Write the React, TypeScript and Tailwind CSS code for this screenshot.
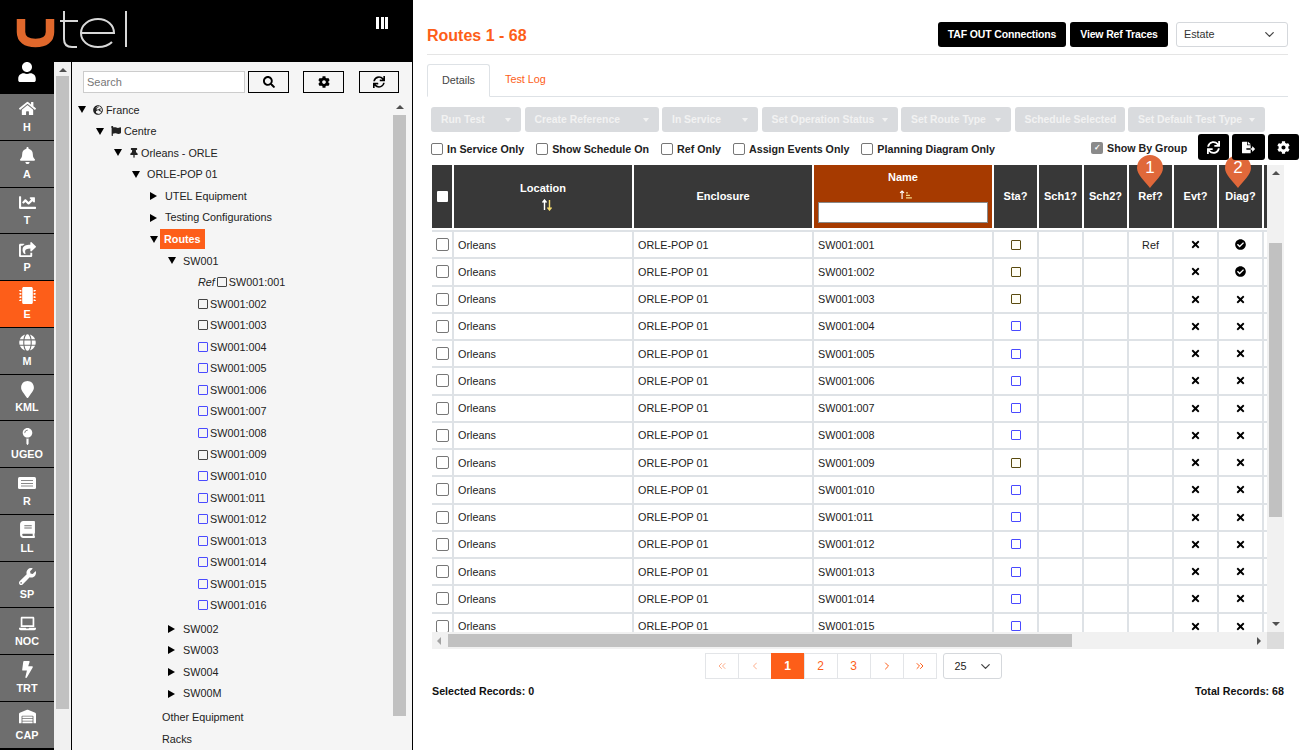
import {
  FaBell,
  FaBolt,
  FaBook,
  FaCheckCircle,
  FaCog,
  FaFileExport,
  FaFlag,
  FaGlobe,
  FaGlobeEurope,
  FaHome,
  FaLaptop,
  FaMapMarker,
  FaMapPin,
  FaMicrochip,
  FaSearch,
  FaShareSquare,
  FaSync,
  FaThumbtack,
  FaTimes,
  FaUser,
  FaWarehouse,
  FaWrench,
  FaChartLine,
} from "react-icons/fa";
import { FiChevronDown, FiChevronLeft, FiChevronRight, FiChevronsLeft, FiChevronsRight } from "react-icons/fi";
import type { ReactNode } from "react";

function CardIcon() {
  return (
    <svg viewBox="0 0 18 12" className="h-[12px] w-[18px]">
      <rect width="18" height="12" rx="1.5" fill="white" />
      <path d="M3 3.5h12M3 6.5h12M3 9h12" stroke="#8a8a8a" strokeWidth="1" />
    </svg>
  );
}

const navItems = [
  { label: "H", icon: <FaHome /> },
  { label: "A", icon: <FaBell /> },
  { label: "T", icon: <FaChartLine /> },
  { label: "P", icon: <FaShareSquare /> },
  { label: "E", icon: <FaMicrochip />, active: true },
  { label: "M", icon: <FaGlobe /> },
  { label: "KML", icon: <FaMapMarker /> },
  { label: "UGEO", icon: <FaMapPin /> },
  { label: "R", icon: <CardIcon /> },
  { label: "LL", icon: <FaBook /> },
  { label: "SP", icon: <FaWrench /> },
  { label: "NOC", icon: <FaLaptop /> },
  { label: "TRT", icon: <FaBolt /> },
  { label: "CAP", icon: <FaWarehouse /> },
];

const actions = [
  { label: "Run Test", width: "w-[90px]", caret: true },
  { label: "Create Reference", width: "w-[134px]", caret: true },
  { label: "In Service", width: "w-[96px]", caret: true },
  { label: "Set Operation Status", width: "w-[136px]", caret: true },
  { label: "Set Route Type", width: "w-[110px]", caret: true },
  { label: "Schedule Selected", width: "w-[110px]", caret: false },
  { label: "Set Default Test Type", width: "w-[137px]", caret: true },
];

const filters = [
  "In Service Only",
  "Show Schedule On",
  "Ref Only",
  "Assign Events Only",
  "Planning Diagram Only",
];

const blueRoutes = [4, 5, 6, 7, 8, 10, 11, 12, 13, 14, 15, 16];
const routeName = (n: number) => `SW001:${String(n).padStart(3, "0")}`;

function Caret({ down }: { down?: boolean }) {
  return down ? (
    <span className="inline-block h-0 w-0 border-x-[4px] border-t-[7px] border-x-transparent border-t-black" />
  ) : (
    <span className="inline-block h-0 w-0 border-y-[4px] border-l-[7px] border-y-transparent border-l-black" />
  );
}

function TreeRow({
  indent,
  caret,
  children,
}: {
  indent: string;
  caret?: "down" | "right";
  children: ReactNode;
}) {
  return (
    <div className={`flex h-[21.55px] items-center ${indent}`}>
      {caret && (
        <span className="flex w-[15px] shrink-0 items-center">
          <Caret down={caret === "down"} />
        </span>
      )}
      {children}
    </div>
  );
}

function RouteBox({ blue }: { blue?: boolean }) {
  return (
    <span
      className={`mr-[2px] inline-block size-[10px] rounded-[1px] border ${
        blue ? "border-[#4a4aff]" : "border-[#444]"
      }`}
    />
  );
}

function ScrollArrow({ dir }: { dir: "up" | "down" | "left" | "right" }) {
  const cls = {
    up: "border-x-[4px] border-b-[4px] border-x-transparent border-b-[#505050]",
    down: "border-x-[4px] border-t-[4px] border-x-transparent border-t-[#505050]",
    left: "border-y-[4px] border-r-[4px] border-y-transparent border-r-[#a3a3a3]",
    right: "border-y-[4px] border-l-[4px] border-y-transparent border-l-[#505050]",
  }[dir];
  return <span className={`block h-0 w-0 ${cls}`} />;
}

function Sidebar() {
  return (
    <div className="flex h-full w-[413px] shrink-0 flex-col">
      <div className="flex h-[62px] shrink-0 items-start justify-between bg-black">
        <svg viewBox="0 0 130 50" className="mt-[5px] ml-[5px] h-[50px] w-[130px]" fill="none">
          <path d="M16 14v13c0 7 5 11 14.5 11S45 34 45 27V14" stroke="#e0682c" strokeWidth="8.5" />
          <path d="M59 6v28c0 6 3 8 8 8h5M55 16h18" stroke="#d8d8d8" strokeWidth="2" />
          <path d="M76 28h33c0-8-7-14-16-14S76 20 76 28s7 14 17 14c6 0 11-2 14-5" stroke="#d8d8d8" strokeWidth="2" />
          <path d="M121 6v36" stroke="#d8d8d8" strokeWidth="2" />
        </svg>
        <div className="mt-[17px] mr-[25px] flex gap-[1.5px]">
          <span className="h-[12px] w-[3px] bg-white" />
          <span className="h-[12px] w-[3px] bg-white" />
          <span className="h-[12px] w-[3px] bg-white" />
        </div>
      </div>
      <div className="flex min-h-0 flex-1">
        <nav className="flex w-[54px] shrink-0 flex-col bg-black">
          <div className="flex h-[32px] shrink-0 items-start justify-center text-[20px] text-white">
            <FaUser />
          </div>
          {navItems.map((item) => (
            <div
              key={item.label}
              className={`flex h-[46.75px] shrink-0 flex-col items-center justify-center border-b border-black text-white ${
                item.active ? "bg-[#fd5e19]" : "bg-[#6e6e6e]"
              }`}
            >
              <span className="flex h-[18px] items-center text-[17px] leading-[18px]">{item.icon}</span>
              <span className="mt-[2px] text-[10.8px] leading-[14px] font-bold">{item.label}</span>
            </div>
          ))}
        </nav>
        <div className="flex w-[17px] shrink-0 flex-col items-center bg-[#f1f1f1] pt-[6px]">
          <ScrollArrow dir="up" />
          <div className="mt-[4px] h-[633px] w-[13px] bg-[#c1c1c1]" />
        </div>
        <div className="w-[1px] shrink-0 bg-black" />
        <div className="flex min-w-0 flex-1 flex-col border-r border-black bg-[#f5f5f5]">
          <div className="flex h-[37px] shrink-0 items-start pt-[9px] pl-[11px]">
            <input
              readOnly
              placeholder="Search"
              className="h-[22px] w-[162px] border border-[#ccc] bg-white px-[3px] text-[11px] placeholder:text-[#777]"
            />
            <button className="ml-[3px] flex h-[22px] w-[41px] items-center justify-center border border-black text-[12px]">
              <FaSearch />
            </button>
            <button className="ml-[14px] flex h-[22px] w-[41px] items-center justify-center border border-black text-[12px]">
              <FaCog />
            </button>
            <button className="ml-[15px] flex h-[22px] w-[40px] items-center justify-center border border-black text-[12px]">
              <FaSync />
            </button>
          </div>
          <div className="flex min-h-0 flex-1">
            <div className="flex-1 overflow-hidden text-[10.8px] text-[#222]">
              <TreeRow indent="pl-[6px]" caret="down">
                <FaGlobeEurope className="mr-[3px] text-[10px]" />
                France
              </TreeRow>
              <TreeRow indent="pl-[24px]" caret="down">
                <FaFlag className="mr-[3px] text-[10px]" />
                Centre
              </TreeRow>
              <TreeRow indent="pl-[42px]" caret="down">
                <FaThumbtack className="mr-[2px] text-[10px]" />
                Orleans - ORLE
              </TreeRow>
              <TreeRow indent="pl-[60px]" caret="down">
                ORLE-POP 01
              </TreeRow>
              <TreeRow indent="pl-[78px]" caret="right">
                UTEL Equipment
              </TreeRow>
              <TreeRow indent="pl-[78px]" caret="right">
                Testing Configurations
              </TreeRow>
              <TreeRow indent="pl-[78px]" caret="down">
                <span className="-ml-[5px] bg-[#fd5e19] px-[4px] py-[3px] leading-[14px] font-bold text-white">
                  Routes
                </span>
              </TreeRow>
              <TreeRow indent="pl-[96px]" caret="down">
                SW001
              </TreeRow>
              <TreeRow indent="pl-[126px]">
                <span className="mr-[2px] italic">Ref</span>
                <RouteBox />
                {routeName(1)}
              </TreeRow>
              {Array.from({ length: 15 }, (_, i) => i + 2).map((n) => (
                <TreeRow key={n} indent="pl-[126px]">
                  <RouteBox blue={blueRoutes.includes(n)} />
                  {routeName(n)}
                </TreeRow>
              ))}
              {["SW002", "SW003", "SW004", "SW00M"].map((s, i) => (
                <TreeRow key={s} indent={i === 0 ? "mt-[2px] pl-[96px]" : "pl-[96px]"} caret="right">
                  {s}
                </TreeRow>
              ))}
              <TreeRow indent="mt-[2px] pl-[90px]">Other Equipment</TreeRow>
              <TreeRow indent="pl-[90px]">Racks</TreeRow>
            </div>
            <div className="flex w-[22px] shrink-0 flex-col items-center pt-[6px] pr-[3px]">
              <ScrollArrow dir="up" />
              <div className="mt-[6px] h-[601px] w-[13px] bg-[#c1c1c1]" />
            </div>
          </div>
        </div>
      </div>
    </div>
  );
}

const colWidths = {
  check: "w-[20px]",
  wide: "w-[178px]",
  narrow: "w-[43px]",
};

function HeadCell({ width, children, active }: { width: string; children?: ReactNode; active?: boolean }) {
  return (
    <div
      className={`flex h-full shrink-0 flex-col items-center justify-center text-[11px] font-bold text-white ${width} ${
        active ? "bg-[#a63a00]" : "bg-[#383838]"
      }`}
    >
      {children}
    </div>
  );
}

function SortArrows({ sorted }: { sorted?: boolean }) {
  return sorted ? (
    <svg viewBox="0 0 14 10" className="mt-[4px] ml-[6px] h-[10px] w-[14px]" fill="none" stroke="white" strokeWidth="1.2">
      <path d="M3 10V1M1 3l2-2 2 2" />
      <path d="M7 3h2M7 5.5h4M7 8h6" stroke="#f5d98a" />
    </svg>
  ) : (
    <svg viewBox="0 0 12 12" className="mt-[2px] mb-[2px] ml-[8px] h-[12px] w-[12px]" fill="none" strokeWidth="1.4">
      <path d="M3.5 11V1M1.5 3.5l2-2.5 2 2.5" stroke="white" />
      <path d="M8.5 1v10M6.5 8.5l2 2.5 2-2.5" stroke="#f7dc6f" />
    </svg>
  );
}

function RouteRow({ n }: { n: number }) {
  const amber = n <= 3 || n === 9;
  return (
    <div className="flex h-[27.25px] shrink-0 gap-[2px] border-b-2 border-[#dee2e6] text-[10.8px] text-[#222]">
      <div className={`flex shrink-0 items-center justify-center ${colWidths.check}`}>
        <span className="size-[13px] rounded-[2px] border border-[#777] bg-white" />
      </div>
      <Divider />
      <div className={`flex shrink-0 items-center pl-[4px] ${colWidths.wide}`}>Orleans</div>
      <Divider />
      <div className={`flex shrink-0 items-center pl-[4px] ${colWidths.wide}`}>ORLE-POP 01</div>
      <Divider />
      <div className={`flex shrink-0 items-center pl-[4px] ${colWidths.wide}`}>{routeName(n)}</div>
      <Divider />
      <div className={`flex shrink-0 items-center justify-center ${colWidths.narrow}`}>
        <span
          className={`size-[10px] rounded-[1px] border ${amber ? "border-[#5a4a10] bg-[#fffef5]" : "border-[#4a4aff]"}`}
        />
      </div>
      <Divider />
      <div className={`shrink-0 ${colWidths.narrow}`} />
      <Divider />
      <div className={`shrink-0 ${colWidths.narrow}`} />
      <Divider />
      <div className={`flex shrink-0 items-center justify-center ${colWidths.narrow}`}>{n === 1 ? "Ref" : ""}</div>
      <Divider />
      <div className={`flex shrink-0 items-center justify-center text-[11px] text-black ${colWidths.narrow}`}>
        <FaTimes />
      </div>
      <Divider />
      <div className={`flex shrink-0 items-center justify-center text-[11px] text-black ${colWidths.narrow}`}>
        {n <= 2 ? <FaCheckCircle /> : <FaTimes />}
      </div>
      <Divider />
    </div>
  );
}

function Divider() {
  return <span className="-mx-[2px] w-[2px] shrink-0 bg-[#dee2e6]" />;
}

function Pin({ n, className }: { n: number; className: string }) {
  return (
    <div className={`absolute h-[33px] w-[28px] ${className}`}>
      <svg viewBox="0 0 28 33" className="absolute inset-0 h-full w-full">
        <path d="M14 33C9 26 1 20 1 13a13 13 0 0 1 26 0c0 7-8 13-13 20z" fill="#e0683a" />
      </svg>
      <span className="absolute inset-x-0 top-[3px] text-center text-[17px] leading-[20px] text-white">{n}</span>
    </div>
  );
}

function PageButton({ children, active }: { children: ReactNode; active?: boolean }) {
  return (
    <div
      className={`-mr-[1px] flex h-[26px] w-[34px] items-center justify-center border border-[#e3e5e8] text-[12px] ${
        active ? "border-[#fd5e19] bg-[#fd5e19] font-bold text-white" : "text-[#fd5e19]"
      }`}
    >
      {children}
    </div>
  );
}

function Main() {
  return (
    <main className="flex min-w-0 flex-1 flex-col bg-white pr-[13px] pl-[14px]">
      <div className="flex h-[55px] shrink-0 items-start justify-between border-b border-[#e5e5e5] pt-[22px]">
        <h1 className="mt-[3px] text-[16px] leading-[22px] font-bold text-[#fd5e19]">Routes 1 - 68</h1>
        <div className="flex items-center">
          <button className="h-[25px] w-[128px] rounded-[3px] bg-black text-[10.5px] font-bold tracking-[-0.15px] text-white">
            TAF OUT Connections
          </button>
          <button className="ml-[4px] h-[25px] w-[98px] rounded-[3px] bg-black text-[10.5px] font-bold tracking-[-0.15px] text-white">
            View Ref Traces
          </button>
          <div className="ml-[8px] flex h-[25px] w-[112px] items-center justify-between rounded-[3px] border border-[#d5d8dc] pr-[10px] pl-[7px] text-[10.8px] text-[#333]">
            Estate
            <FiChevronDown className="text-[15px] text-[#444]" />
          </div>
        </div>
      </div>

      <div className="mt-[9px] flex h-[33px] shrink-0 items-end border-b border-[#dee2e6] text-[10.8px]">
        <div className="-mb-[1px] flex h-[33px] w-[63px] items-center justify-center rounded-t-[3px] border border-[#dee2e6] border-b-white bg-white text-[#444]">
          Details
        </div>
        <div className="flex h-[33px] items-center pl-[15px] text-[#fd5e19]">Test Log</div>
      </div>

      <div className="mt-[10px] ml-[4px] flex h-[25px] shrink-0 gap-[3.5px]">
        {actions.map((a) => (
          <div
            key={a.label}
            className={`flex shrink-0 items-center justify-between rounded-[3px] bg-[#d9dbde] px-[10px] text-[10.4px] font-bold whitespace-nowrap text-[#f2f2f2] ${a.width}`}
          >
            {a.label}
            {a.caret && (
              <span className="h-0 w-0 border-x-[3.5px] border-t-[4px] border-x-transparent border-t-[#f2f2f2]" />
            )}
          </div>
        ))}
      </div>

      <div className="relative ml-[4px] flex h-[33px] shrink-0 items-center">
        <div className="mt-[2px] flex items-center text-[10.7px] font-bold text-[#222]">
          {filters.map((f) => (
            <label key={f} className="mr-[12px] flex items-center gap-[4px]">
              <span className="size-[12px] rounded-[2px] border border-[#777] bg-white" />
              {f}
            </label>
          ))}
        </div>
        <label className="absolute top-[8px] left-[660px] flex items-center gap-[4px] text-[10.7px] font-bold text-[#222]">
          <span className="flex size-[12px] items-center justify-center rounded-[2px] bg-[#8a8a8a] text-[8px] leading-none text-white">
            ✓
          </span>
          Show By Group
        </label>
        <div className="absolute top-[2px] left-[767px] z-10 flex gap-[3px] text-[13px] text-white">
          <span className="flex h-[26px] w-[31px] items-center justify-center rounded-[3px] bg-black">
            <FaSync />
          </span>
          <span className="flex h-[26px] w-[33px] items-center justify-center rounded-[3px] bg-black">
            <FaFileExport />
          </span>
          <span className="flex h-[26px] w-[31px] items-center justify-center rounded-[3px] bg-black">
            <FaCog />
          </span>
        </div>
      </div>

      <div className="relative ml-[5px] flex h-[484px] w-[852px] shrink-0 flex-col">
        <div className="flex min-h-0 flex-1">
          <div className="w-[835px] shrink-0 overflow-hidden">
            <div className="flex h-[63px] gap-[2px]">
              <HeadCell width={colWidths.check}>
                <span className="size-[11px] rounded-[1px] bg-white" />
              </HeadCell>
              <HeadCell width={colWidths.wide}>
                Location
                <SortArrows />
              </HeadCell>
              <HeadCell width={colWidths.wide}>Enclosure</HeadCell>
              <HeadCell width={colWidths.wide} active>
                <span className="mt-[4px]">Name</span>
                <SortArrows sorted />
                <span className="mt-[3px] mb-[5px] h-[21px] w-[170px] border border-[#888] bg-white" />
              </HeadCell>
              {["Sta?", "Sch1?", "Sch2?", "Ref?", "Evt?", "Diag?"].map((h) => (
                <HeadCell key={h} width={colWidths.narrow}>
                  {h}
                </HeadCell>
              ))}
              <HeadCell width="w-[3px]" />
            </div>
            <div className="mt-[2px] h-[2px] bg-[#dee2e6]" />
            {Array.from({ length: 15 }, (_, i) => i + 1).map((n) => (
              <RouteRow key={n} n={n} />
            ))}
          </div>
          <div className="flex w-[17px] shrink-0 flex-col items-center bg-[#f1f1f1] pt-[6px]">
            <ScrollArrow dir="up" />
            <div className="mt-[68px] h-[274px] w-[13px] bg-[#c1c1c1]" />
            <div className="mt-auto mb-[6px]">
              <ScrollArrow dir="down" />
            </div>
          </div>
        </div>
        <div className="flex h-[17px] shrink-0 items-center bg-[#f1f1f1]">
          <span className="ml-[5px]">
            <ScrollArrow dir="left" />
          </span>
          <div className="ml-[7px] h-[13px] w-[624px] bg-[#c1c1c1]" />
          <span className="mr-[6px] ml-auto">
            <ScrollArrow dir="right" />
          </span>
          <div className="h-[17px] w-[17px] bg-[#dcdcdc]" />
        </div>
        <Pin n={1} className="top-[-10px] left-[704px]" />
        <Pin n={2} className="top-[-10px] left-[792px]" />
      </div>

      <div className="mt-[4px] flex h-[26px] shrink-0 items-center justify-center">
        <div className="ml-[-9px] flex items-center">
          <PageButton>
            <FiChevronsLeft className="opacity-50" />
          </PageButton>
          <PageButton>
            <FiChevronLeft className="opacity-50" />
          </PageButton>
          <PageButton active>1</PageButton>
          <PageButton>2</PageButton>
          <PageButton>3</PageButton>
          <PageButton>
            <FiChevronRight />
          </PageButton>
          <PageButton>
            <FiChevronsRight />
          </PageButton>
          <div className="ml-[7px] flex h-[26px] w-[59px] items-center justify-between rounded-[3px] border border-[#d5d8dc] pr-[8px] pl-[11px] text-[10.8px] text-[#222]">
            25
            <FiChevronDown className="text-[15px] text-[#444]" />
          </div>
        </div>
      </div>

      <div className="mt-[4px] ml-[5px] flex w-[852px] justify-between text-[10.7px] font-bold text-[#111]">
        <span>Selected Records: 0</span>
        <span>Total Records: 68</span>
      </div>
    </main>
  );
}

export default function App() {
  return (
    <div className="flex h-screen overflow-hidden font-['Liberation_Sans',Arial,sans-serif]">
      <Sidebar />
      <Main />
    </div>
  );
}
